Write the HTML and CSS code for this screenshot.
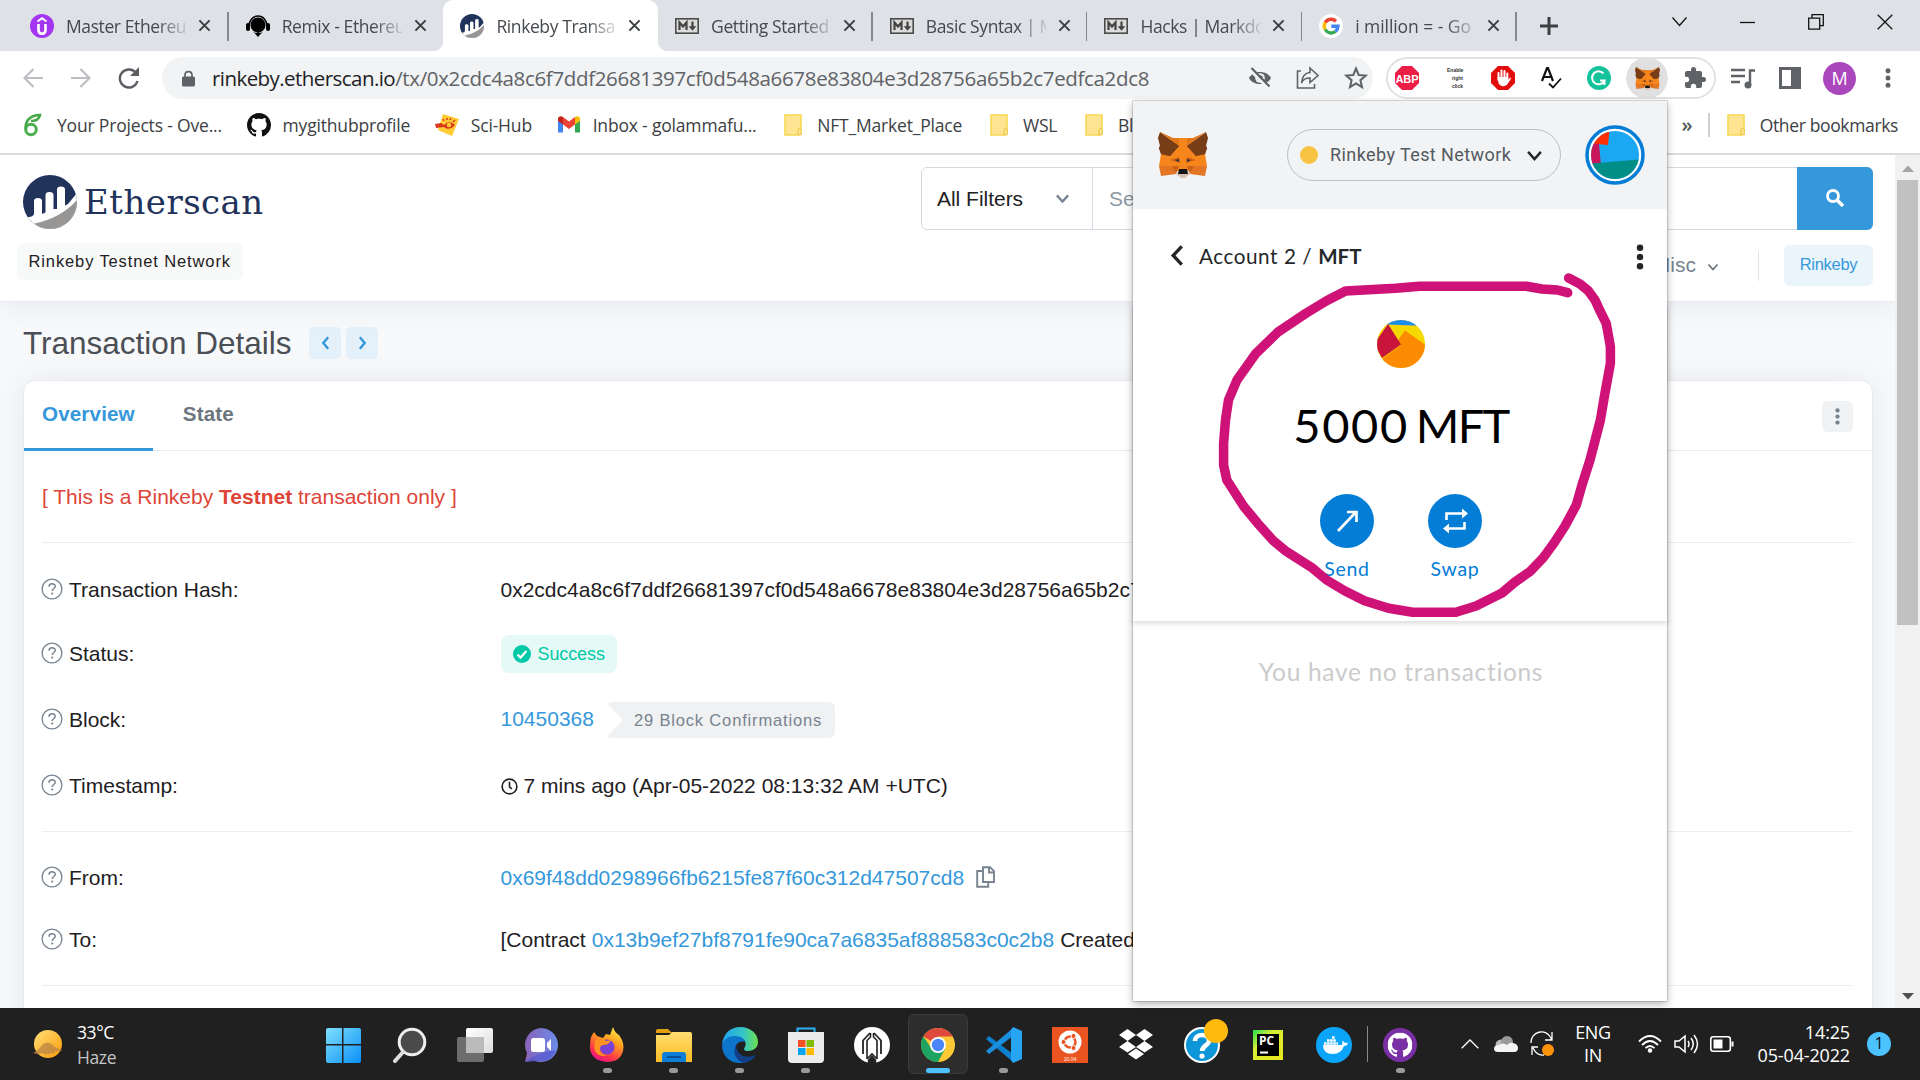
FILE: index.html
```
<!DOCTYPE html>
<html lang="en">
<head>
<meta charset="utf-8">
<title>Rinkeby Transaction</title>
<link rel="stylesheet" href="styles.css">
</head>
<body>
<svg class="defs" width="0" height="0">
  <defs>
    <linearGradient id="gSun" x1="0" y1="0" x2="1" y2="1"><stop offset="0" stop-color="#ffe07a"/><stop offset="1" stop-color="#fb9a06"/></linearGradient>
    <linearGradient id="gWin" x1="0" y1="0" x2="1" y2="1"><stop offset="0" stop-color="#7fe0ff"/><stop offset="1" stop-color="#0a8ff5"/></linearGradient>
    <linearGradient id="gChat" x1="0" y1="0" x2="1" y2="0"><stop offset="0" stop-color="#8a63b8"/><stop offset="1" stop-color="#6a8cea"/></linearGradient>
    <linearGradient id="gFire" x1="0.8" y1="0" x2="0.3" y2="1"><stop offset="0" stop-color="#fff04a"/><stop offset=".4" stop-color="#ff9a1e"/><stop offset=".8" stop-color="#ff2f4f"/><stop offset="1" stop-color="#e3128f"/></linearGradient>
    <linearGradient id="gFold" x1="0" y1="0" x2="0" y2="1"><stop offset="0" stop-color="#ffdf72"/><stop offset="1" stop-color="#fcbb22"/></linearGradient>
    <linearGradient id="gEdge" x1="0" y1="0" x2="1" y2="0"><stop offset="0" stop-color="#1fa3ea"/><stop offset=".6" stop-color="#35c6c4"/><stop offset="1" stop-color="#6fe04e"/></linearGradient>
    <linearGradient id="gPc" x1="0" y1="0" x2="1" y2="1"><stop offset="0" stop-color="#21e04f"/><stop offset=".35" stop-color="#d7ee35"/><stop offset="1" stop-color="#e9e51a"/></linearGradient>
    <linearGradient id="gView" x1="0" y1="0" x2="1" y2="1"><stop offset="0" stop-color="#fff"/><stop offset="1" stop-color="#ddd"/></linearGradient>
  </defs>
  <symbol id="close" viewBox="0 0 14 14"><path d="M1.5 1.5l11 11M12.500 1.500l-11 11" stroke="#3c4043" stroke-width="2.200" fill="none"/></symbol>
  <symbol id="md" viewBox="0 0 24 16"><rect x=".8" y=".8" width="22.400" height="14.400" fill="#dcdcdc" stroke="#4b4b4b" stroke-width="1.600"/><path d="M4.500 12V4.500l3.500 4 3.500-4V12" stroke="#444" stroke-width="2.200" fill="none"/><path d="M17.500 3.500V10" stroke="#444" stroke-width="2.200"/><path d="M13.700 8.300h7.600l-3.800 4.500z" fill="#444"/></symbol>
  <symbol id="folder" viewBox="0 0 18 22"><path d="M1 1h16v14.500c-2 0-2.500 1-2.500 2.500v3H1z" fill="#ffe591" stroke="#f8d856" stroke-width="1.600"/><path d="M14 20.800v-5c0-2 3.300-2 3.300 0v5z" fill="#ffe591" stroke="#e9c13c"/></symbol>
  <symbol id="github" viewBox="0 0 16 16"><path d="M8 0C3.580 0 0 3.580 0 8c0 3.540 2.290 6.530 5.470 7.590.4.070.55-.17.55-.38 0-.19-.01-.82-.01-1.490-2.010.37-2.530-.49-2.690-.94-.09-.23-.48-.94-.82-1.130-.28-.15-.68-.52-.01-.53.63-.01 1.080.58 1.230.82.72 1.210 1.870.87 2.330.66.07-.52.28-.87.51-1.070-1.780-.2-3.640-.89-3.640-3.950 0-.87.31-1.590.82-2.150-.08-.2-.36-1.020.08-2.120 0 0 .67-.21 2.200.82.64-.18 1.320-.27 2-.27s1.360.09 2 .27c1.530-1.040 2.200-.82 2.200-.82.44 1.100.16 1.920.08 2.120.51.56.82 1.270.82 2.150 0 3.070-1.870 3.750-3.650 3.950.29.25.54.73.54 1.480 0 1.070-.01 1.930-.01 2.200 0 .21.15.46.55.38A8.010 8.010 0 0016 8c0-4.420-3.580-8-8-8z"/></symbol>
  <symbol id="escan" viewBox="0 0 54 54"><clipPath id="cl"><circle cx="27" cy="27" r="27"/></clipPath><g clip-path="url(#cl)"><rect width="54" height="54" fill="#21325b"/><path d="M0 44l5-2c4 0 5-1 6-3h8l12-5h4l10-5 9-11v36H0z" fill="#fff"/><path d="M11 44V26q0-3 4-3t4 3v16zM22.500 40V20q0-3 4-3t4 3v16zM34 36V14.500q0-3 4-3t4 3V32z" fill="#fff"/><path d="M11.500 48.500Q38 43 54 25v29H12z" fill="#979695"/></g></symbol>
  <symbol id="fox" viewBox="0 0 50 46">
    <path d="M15 6h20l12 16 2 12-12 5H13L1 34l2-12z" fill="#f6851b"/>
    <path d="M2 0l19 14-9 10-9-2-2-6 1-2-2-8zM48 0L29 14l9 10 9-2 2-6-1-2 2-8z" fill="#763d16"/>
    <path d="M2 0l13 6h6v8zM48 0L35 6h-6v8z" fill="#e2761b"/>
    <path d="M5 4l16 10-9 10-9-2-2-6 1-2zM45 4L29 14l9 10 9-2 2-6-1-2z" fill="#763d16"/>
    <path d="M21 6h8l-1 22h-6z" fill="#f6851b"/>
    <path d="M1 34h13l4 8-15 2zM49 34H36l-4 8 15 2z" fill="#e27625"/>
    <path d="M14 34l4 8 3-8zM36 34l-4 8-3-8z" fill="#cd6116"/>
    <path d="M18 42l4-4h6l4 4-5 4h-4z" fill="#d7c1b3"/>
    <path d="M12 28l9-3 1 6zM38 28l-9-3-1 6z" fill="#cd6116"/>
    <path d="M17 28l4-1 0 3zM33 28l-4-1 0 3z" fill="#233447"/>
    <path d="M21 37h8l1 5H20z" fill="#161616"/>
  </symbol>
  <symbol id="help" viewBox="0 0 22 22"><circle cx="11" cy="11" r="9.900" fill="none" stroke="#77838f" stroke-width="1.300"/><path d="M8 8.800c0-4 6.200-3.800 6.200-.4 0 2-3 2.200-3 4.500" fill="none" stroke="#77838f" stroke-width="1.500"/><circle cx="11.200" cy="15.500" r="1.100" fill="#77838f"/></symbol>
  <symbol id="chev" viewBox="0 0 12 12"><path d="M1.500 3.500l4.500 5 4.500-5" fill="none" stroke="currentColor" stroke-width="1.800"/></symbol>
  <symbol id="dots" viewBox="0 0 8 28"><circle cx="4" cy="4" r="3.500"/><circle cx="4" cy="14" r="3.500"/><circle cx="4" cy="24" r="3.500"/></symbol>
</svg>

<div class="screen">
  <div class="tabstrip">
    <div class="tab"><svg class="fav" viewBox="0 0 24 24"><circle cx="12" cy="12" r="12" fill="#a435f0"/><path d="M7.500 7.500L12 4.300l4.500 3.200" stroke="#fff" stroke-width="2" fill="none"/><path d="M8.500 10v6c0 5 7 5 7 0v-6" stroke="#fff" stroke-width="2.600" fill="none"/></svg><span class="tab-title">Master Ethereu</span><svg class="x"><use href="#close"/></svg></div>
    <div class="tab"><svg class="fav" viewBox="0 0 24 24"><path d="M3 12a9 10 0 0118 0" fill="none" stroke="#000" stroke-width="1.600"/><circle cx="12" cy="11" r="7.500"/><rect y="9" width="4" height="8" rx="2"/><rect x="20" y="9" width="4" height="8" rx="2"/><path d="M7.500 18l2.500 1 2-1 2 1 2.500-1-4.500 5z"/></svg><span class="tab-title">Remix - Ethereu</span><svg class="x"><use href="#close"/></svg></div>
    <div class="tab active"><svg class="fav"><use href="#escan"/></svg><span class="tab-title">Rinkeby Transa</span><svg class="x"><use href="#close"/></svg></div>
    <div class="tab"><svg class="fav"><use href="#md"/></svg><span class="tab-title">Getting Started</span><svg class="x"><use href="#close"/></svg></div>
    <div class="tab"><svg class="fav"><use href="#md"/></svg><span class="tab-title">Basic Syntax | M</span><svg class="x"><use href="#close"/></svg></div>
    <div class="tab"><svg class="fav"><use href="#md"/></svg><span class="tab-title">Hacks | Markdo</span><svg class="x"><use href="#close"/></svg></div>
    <div class="tab"><svg class="fav" viewBox="0 0 24 24"><circle cx="12" cy="12" r="12" fill="#fff"/><g fill="none" stroke-width="3.400"><path d="M6.200 8.500A7 7 0 0117 7.200" stroke="#ea4335"/><path d="M6.200 8.500a7 7 0 000 7" stroke="#fbbc05"/><path d="M6.200 15.500A7 7 0 0016.500 17.500" stroke="#34a853"/><path d="M16.500 17.500A7 7 0 0019 12.300H12.300" stroke="#4285f4"/></g></svg><span class="tab-title google">i million = - Go</span><svg class="x"><use href="#close"/></svg></div>
    <svg class="plus" viewBox="0 0 18 18"><path d="M9 0v18M0 9h18" stroke="#3c4043" stroke-width="3"/></svg>
    <div class="wincontrols">
      <svg width="15" height="10" viewBox="0 0 15 10"><path d="M.5.5l7 8 7-8"/></svg>
      <svg width="15" height="10" viewBox="0 0 15 10"><path d="M0 5.500h15"/></svg>
      <svg width="16" height="16" viewBox="0 0 16 16"><path d="M.7 4.200h11v11H.7zM4 4V.7h11.300v11H12"/></svg>
      <svg width="16" height="16" viewBox="0 0 16 16"><path d="M.7.7l14.600 14.600M15.300.7L.7 15.300"/></svg>
    </div>
  </div>

  <div class="toolbar">
    <svg class="nav" viewBox="0 0 20 20"><path d="M20 10H2M10.500 1L1.500 10l9 9" stroke="#bcbec1" stroke-width="2.200" fill="none"/></svg>
    <svg class="nav" viewBox="0 0 20 20"><path d="M0 10h18M9.500 1l9 9-9 9" stroke="#bcbec1" stroke-width="2.200" fill="none"/></svg>
    <svg class="nav reload" viewBox="0 0 22 22"><path d="M18 6a9 9 0 101.500 8" stroke="#5a5e62" stroke-width="2.400" fill="none"/><path d="M21 0v9h-9z" fill="#5a5e62"/></svg>
    <div class="omnibox">
      <svg class="lock" viewBox="0 0 13 16"><path d="M3 7V4.500c0-4.500 7-4.500 7 0V7" fill="none" stroke="#5f6368" stroke-width="1.700"/><rect y="6" width="13" height="10" rx="1.500" fill="#5f6368"/></svg>
      <span class="url"><span class="host">rinkeby.etherscan.io</span><span class="path">/tx/0x2cdc4a8c6f7ddf26681397cf0d548a6678e83804e3d28756a65b2c7edfca2dc8</span></span>
      <svg class="oicon" viewBox="0 0 24 24"><path d="M1 12C5 4 19 4 23 12 19 20 5 20 1 12z" fill="#5f6368"/><circle cx="12" cy="12" r="4.800" fill="#f1f3f4"/><circle cx="12" cy="12" r="2.800" fill="#5f6368"/><path d="M1.500 3.500l19 19" stroke="#f1f3f4" stroke-width="3"/><path d="M3.500 2l18 18.500" stroke="#5f6368" stroke-width="2.200"/></svg>
      <svg class="oicon" viewBox="0 0 24 24"><path d="M5 5H1.500v17h17v-4M14 2l8 7.500-8 7v-4.500c-4 0-7 1-8.500 5C6 11 9 7 14 6.500z" fill="none" stroke="#5f6368" stroke-width="1.600"/></svg>
      <svg class="oicon" viewBox="0 0 24 24"><path d="M12 2.500l2.700 6.500 7 .6-5.300 4.600 1.600 6.900-6-3.700-6 3.700 1.600-6.900L2.300 9.600l7-.6z" fill="none" stroke="#5f6368" stroke-width="2"/></svg>
    </div>
    <div class="extensions">
      <span class="slot"><svg width="24" height="24" viewBox="0 0 24 24"><path d="M7 0h10l7 7v10l-7 7H7l-7-7V7z" fill="#ed1e45"/><text x="12" y="16.500" text-anchor="middle" class="abp">ABP</text></svg></span>
      <span class="slot erc"><i>Enable</i><i>right</i><i>click</i></span>
      <span class="slot"><svg width="24" height="24" viewBox="0 0 24 24"><path d="M7 0h10l7 7v10l-7 7H7l-7-7V7z" fill="#e40d0d"/><path d="M7.500 14V7M10.500 12V4.500M13.500 12V5M16.300 13V7.500" stroke="#fff" stroke-width="2" stroke-linecap="round"/><path d="M6.500 11h10.800v3l2-2.500c1 0 .8 1 .2 2L16.500 18c-2 3-7.500 3-9-1z" fill="#fff"/></svg></span>
      <span class="slot"><svg width="22" height="24" viewBox="0 0 22 24"><path d="M2 15L7 2h1l5 13M4 11h7" stroke="#111" stroke-width="2.200" fill="none"/><path d="M9 17.500l4 4 8-9" stroke="#111" stroke-width="1.800" fill="none"/></svg></span>
      <span class="slot"><svg width="24" height="24" viewBox="0 0 24 24"><circle cx="12" cy="12" r="12" fill="#15c39a"/><path d="M16.500 7.500a6.500 6.500 0 101 7H13M17.500 14v5" stroke="#fff" stroke-width="2" fill="none"/></svg></span>
      <span class="slot on"><svg width="25" height="23"><use href="#fox"/></svg></span>
      <span class="slot"><svg width="24" height="24" viewBox="0 0 24 24"><path d="M20.500 11H19V7a2 2 0 00-2-2h-4V3.500a2.500 2.500 0 00-5 0V5H4a2 2 0 00-2 2v3.800h1.500a2.700 2.700 0 010 5.400H2V20a2 2 0 002 2h3.800v-1.500a2.700 2.700 0 015.400 0V22H17a2 2 0 002-2v-4h1.500a2.500 2.500 0 000-5z" fill="#5f6368"/></svg></span>
    </div>
    <div class="right-tools">
      <svg width="24" height="22" viewBox="0 0 24 22"><path d="M0 3h14M0 9h14M0 15h9M19 18V3.500h5" stroke="#5f6368" stroke-width="2.400" fill="none"/><circle cx="17" cy="18" r="3.500" fill="#5f6368"/></svg>
      <svg width="22" height="22" viewBox="0 0 22 22"><path d="M1.500 1.500h19v19h-19z" fill="#fff" stroke="#5f6368" stroke-width="3"/><path d="M12 1h9v20h-9z" fill="#5f6368"/></svg>
      <span class="me">M</span>
      <svg width="6" height="20" viewBox="0 0 8 28" fill="#5f6368"><use href="#dots"/></svg>
    </div>
  </div>

  <div class="bookmarks">
    <div class="bm"><svg viewBox="0 0 24 24"><circle cx="10" cy="16.500" r="5.300" fill="none" stroke="#4caf50" stroke-width="3"/><path d="M4.700 16C4 8 9 2 19 2c-1 5-5 6-9 6" fill="none" stroke="#46a948" stroke-width="2.600"/></svg><span>Your Projects - Ove...</span></div>
    <div class="bm"><svg fill="#111"><use href="#github"/></svg><span>mygithubprofile</span></div>
    <div class="bm"><svg viewBox="0 0 24 24"><path d="M8 1l16 5-7 17-14-6z" fill="#fc3"/><path d="M0 11l6-1 3 2c4-4 8-3 11 0-3 4-8 5-11 2l-8 1z" fill="#d8391d"/><circle cx="14" cy="12" r="2.200" fill="#fc3"/><path d="M9 8l-1-2M12 7V5M15 7l1-2M18 9l2-2" stroke="#d8391d" stroke-width="1.500"/></svg><span>Sci-Hub</span></div>
    <div class="bm"><svg viewBox="0 0 24 24"><path d="M1 5v14.500h5V10z" fill="#4285f4"/><path d="M23 5v14.500h-5V10z" fill="#34a853"/><path d="M1 6c0-3 3-3.500 5-2v7.500L1 8z" fill="#c5221f"/><path d="M23 6c0-3-3-3.500-5-2v7.500L23 8z" fill="#fbbc04"/><path d="M6 4l6 4.500L18 4v7.500L12 16l-6-4.500z" fill="#ea4335"/></svg><span>Inbox - golammafu...</span></div>
    <div class="bm fold"><svg><use href="#folder"/></svg><span>NFT_Market_Place</span></div>
    <div class="bm fold"><svg><use href="#folder"/></svg><span>WSL</span></div>
    <div class="bm fold"><svg><use href="#folder"/></svg><span>Bl</span></div>
    <div class="bm-end"><b>»</b><i></i><div class="bm fold"><svg><use href="#folder"/></svg><span>Other bookmarks</span></div></div>
  </div>

  <div class="viewport">
    <div class="page">
      <div class="header">
        <div class="brand">
          <div class="logo"><svg><use href="#escan"/></svg><span>Etherscan</span></div>
          <div class="netbadge">Rinkeby Testnet Network</div>
        </div>
        <div class="head-right">
          <div class="search"><div class="filter"><span>All Filters</span><svg><use href="#chev"/></svg></div><div class="query">Se</div><div class="go"><svg viewBox="0 0 18 18"><circle cx="7" cy="7" r="5.500" fill="none" stroke="#fff" stroke-width="2.800"/><path d="M11 11l6 6" stroke="#fff" stroke-width="3.400"/></svg></div></div>
          <div class="menu"><span>Misc</span><svg><use href="#chev"/></svg><i></i><b>Rinkeby</b></div>
        </div>
      </div>
      <div class="title"><h1>Transaction Details</h1><span><svg viewBox="0 0 10 16"><path d="M8 1.500L2.500 8 8 14.500"/></svg></span><span><svg viewBox="0 0 10 16"><path d="M2 1.500L7.500 8 2 14.500"/></svg></span></div>
      <div class="card">
        <div class="cardtabs"><span class="sel">Overview</span><span>State</span><em><svg viewBox="0 0 8 28" fill="#77838f"><use href="#dots"/></svg></em></div>
        <div class="body">
          <div class="warn">[ This is a Rinkeby <b>Testnet</b> transaction only ]</div>
          <div class="group">
            <div class="row"><svg class="q"><use href="#help"/></svg><label>Transaction Hash:</label><div>0x2cdc4a8c6f7ddf26681397cf0d548a6678e83804e3d28756a65b2c7edfca2dc8</div></div>
            <div class="row"><svg class="q"><use href="#help"/></svg><label>Status:</label><div><span class="ok"><svg viewBox="0 0 18 18"><circle cx="9" cy="9" r="9" fill="#00c9a7"/><path d="M4.500 9.500l3 3L13.500 6" stroke="#fff" stroke-width="2.300" fill="none"/></svg>Success</span></div></div>
            <div class="row tall"><svg class="q"><use href="#help"/></svg><label>Block:</label><div><a class="blk">10450368</a><span class="conf">29 Block Confirmations</span></div></div>
            <div class="row time"><svg class="q"><use href="#help"/></svg><label>Timestamp:</label><div><svg class="clock" viewBox="0 0 18 18"><circle cx="9" cy="9" r="7.800"/><path d="M9 4v5.500l2.500 2"/></svg>7 mins ago (Apr-05-2022 08:13:32 AM +UTC)</div></div>
          </div>
          <div class="group">
            <div class="row short"><svg class="q"><use href="#help"/></svg><label>From:</label><div><a>0x69f48dd0298966fb6215fe87f60c312d47507cd8</a><svg class="copy" viewBox="0 0 19 22"><path d="M7 1.200h7l4 4V16H7zM13 1.500V6.500h5M6 5H1.200v15.700h11V17"/></svg></div></div>
            <div class="row short"><svg class="q"><use href="#help"/></svg><label>To:</label><div class="to"><span>[Contract</span><a>0x13b9ef27bf8791fe90ca7a6835af888583c0c2b8</a><span>Created]</span></div></div>
          </div>
        </div>
      </div>
    </div>
    <div class="scrollbar"><svg viewBox="0 0 12 7"><path d="M0 7l6-6.500L12 7z" fill="#a3a3a3"/></svg><div class="thumb"></div><svg class="down" viewBox="0 0 12 7"><path d="M0 0l6 6.500L12 0z" fill="#505050"/></svg></div>
  </div>

  <div class="taskbar">
    <div class="weather"><svg viewBox="0 0 30 28"><circle cx="15" cy="14" r="14" fill="url(#gSun)"/><path d="M0 23q7-4 8-7 6-7 13 0 3 3 9 4-4 2-8 1 1 3-4 2-4 3-9 0-4 2-9 0z" fill="#b98445" opacity=".75"/></svg><div><span>33°C</span><span class="dim">Haze</span></div></div>
    <div class="apps">
      <div class="app"><svg viewBox="0 0 36 36"><path d="M1 3q0-2 2-2h14v16H1zM18.500 1H34q2 0 2 2v14H18.500zM1 18.500h16V36H3q-2 0-2-2zM18.500 18.500H36V34q0 2-2 2H18.500z" fill="url(#gWin)"/></svg></div>
      <div class="app"><svg viewBox="0 0 36 36"><circle cx="21" cy="15" r="12.800" fill="#4a4a4a" stroke="#eee" stroke-width="3"/><path d="M12 25l-8 9" stroke="#ddd" stroke-width="4" stroke-linecap="round"/></svg></div>
      <div class="app"><svg viewBox="0 0 36 36"><rect x="0" y="10" width="27" height="25" rx="2" fill="#6d6d6d"/><rect x="9" y="1" width="27" height="25" rx="2" fill="url(#gView)"/><rect x="9" y="10" width="18" height="16" fill="#bbb"/></svg></div>
      <div class="app"><svg viewBox="0 0 36 36"><path d="M18 1a17 17 0 11-8 32l-8 2 2-9A17 17 0 0118 1z" fill="url(#gChat)"/><path d="M9 30Q28 22 33 24 28 35 16 34L2 35z" fill="#5558d0" opacity=".7"/><rect x="8" y="11" width="14" height="14" rx="2.500" fill="#fff"/><path d="M24 16l4-4v12l-4-4z" fill="#fff"/></svg></div>
      <div class="app run"><svg viewBox="0 0 36 36"><path d="M2 10l3-5 3 4 6 2 3-4 4 1 3-8q2 6 6 8 6 8 4 16-3 11-16 11Q3 34 1 22q0-8 1-12z" fill="url(#gFire)"/><circle cx="18" cy="20" r="7.500" fill="#7842d6"/><path d="M8 11q5-1 9 3l5-1q-2 5-7 5-4 0-4 4 0 6 8 6-9 3-13-4-2-8 2-13z" fill="#ff9322"/></svg></div>
      <div class="app run"><svg viewBox="0 0 36 36"><path d="M0 4q0-2 2-2h10l4 4H0z" fill="#e19f0c"/><path d="M0 8h13l3-3h18q2 0 2 2v28H0z" fill="url(#gFold)"/><path d="M6 35v-7q0-3 3-3h18q3 0 3 3v7z" fill="#0d7fd6"/><path d="M11 30h14" stroke="#064f9c" stroke-width="2"/></svg></div>
      <div class="app run"><svg viewBox="0 0 36 36"><path d="M0 18C1 6 9 0 18 0c11 0 18 7 18 15 0 6-5 9-10 9-4 0-5-2-3-4 3-7-4-10-9-10C7 10 2 13 0 18z" fill="url(#gEdge)"/><path d="M0 18c1-5 6-9 13-9 5 0 9 2 10 6-6-2-11 3-9 9 2 7 11 10 19 5-4 5-9 7-15 7C8 36 0 29 0 18z" fill="#0c74ca"/><path d="M14 18q-5 12 7 18 8-1 13-8-10 4-16-1-4-4-4-9z" fill="#123f86"/></svg></div>
      <div class="app run"><svg viewBox="0 0 36 36"><path d="M9.500 7V1.500h17V7" fill="none" stroke="#2fb2f2" stroke-width="2"/><path d="M0 5h36v27q0 4-4 4H4q-4 0-4-4z" fill="#ececec"/><path d="M10 13h7.500v7H10z" fill="#f25022"/><path d="M18.500 13H26v7h-7.500z" fill="#7fba00"/><path d="M10 21h7.500v7H10z" fill="#00a4ef"/><path d="M18.500 21H26v7h-7.500z" fill="#ffb900"/></svg></div>
      <div class="app"><svg viewBox="0 0 36 36"><circle cx="18" cy="18" r="18" fill="#fff"/><path d="M9 27V13.500l7-7.500M27 27V13.500L20 6" stroke="#222" stroke-width="1.800" fill="none"/><path d="M13 32V13.500l3.500-3.500V6M23 32V13.500L19.500 10V6M13 32l5-5 5 5" fill="none" stroke="#222" stroke-width="1.600"/><path d="M13.800 33l4.200-5 4.200 5v3h-8.400z" fill="#222"/></svg></div>
      <div class="app run current"><svg viewBox="0 0 36 36"><circle cx="18" cy="18" r="17" fill="#fcc934"/><path d="M18 18L3.300 9.500A17 17 0 0132.700 9.500H18z" fill="#de4b3e"/><path d="M3.300 9.500A17 17 0 0018 35l7-13H12z" fill="#1da462"/><circle cx="18" cy="18" r="8" fill="#fff"/><circle cx="18" cy="18" r="6.200" fill="#4a86f7"/></svg></div>
      <div class="app run"><svg viewBox="0 0 36 36"><path d="M0 12l3-3 24 18v8z" fill="#0c7fcf"/><path d="M0 24l3 3L27 9V1z" fill="#1a8fdd"/><path d="M27 0l9 4v28l-9 4-2-3V3z" fill="#27a5f2"/></svg></div>
      <div class="app"><svg viewBox="0 0 36 36"><rect width="36" height="36" fill="#e95420"/><circle cx="18" cy="15" r="11.500" fill="#fff"/><circle cx="18" cy="15" r="5.500" fill="none" stroke="#e95420" stroke-width="2.500"/><g fill="#e95420" stroke="#fff"><circle cx="11.500" cy="15" r="2.500"/><circle cx="21.500" cy="9" r="2.500"/><circle cx="21.500" cy="21" r="2.500"/></g><text x="18" y="33.500" text-anchor="middle" class="ver">20.04</text></svg></div>
      <div class="app"><svg viewBox="0 0 36 36"><path d="M9.500 2l8.500 6-8.500 6L1 8zM26.500 2L35 8l-8.500 6L18 8zM9.500 14l8.500 6-8.500 5.500L1 20zM26.500 14l8.500 6-8.500 5.500L18 20zM18 21.500l8 5.500-8 5.500-8-5.500z" fill="#fff"/></svg></div>
      <div class="app"><svg class="wide" viewBox="0 0 44 44"><circle cx="18" cy="26" r="17" fill="#0c96d8" stroke="#fff" stroke-width="2"/><path d="M11 22c0-8 14-8 14 0 0 4-7 5-7 10" fill="none" stroke="#fff" stroke-width="4.500"/><circle cx="18" cy="37" r="2.600" fill="#fff"/><circle cx="32" cy="12" r="12" fill="#ffb90f"/></svg></div>
      <div class="app"><svg viewBox="0 0 36 36"><rect x="3" y="3" width="30" height="30" fill="url(#gPc)"/><rect x="7" y="7" width="22" height="22" fill="#000"/><text x="9" y="18" class="pc">PC</text><path d="M10 25.500h8" stroke="#fff" stroke-width="2"/></svg></div>
      <div class="app"><svg viewBox="0 0 36 36"><circle cx="18" cy="18" r="18" fill="#0aa5fb"/><path d="M7 18h19q1-3 0-4 2 0 3 2 2-.5 3 0-1 3-4 3-3 8-11 8-10 0-10-9z" fill="#fff"/><path d="M8 16.500h14M11 13.500h9M16 10.500h3" stroke="#fff" stroke-width="2.400" stroke-dasharray="2.600 .5"/></svg></div>
      <i class="sep"></i>
      <div class="app run"><svg viewBox="0 0 36 36"><circle cx="18" cy="18" r="17" fill="#7b2fa5"/><svg x="5.500" y="5.500" width="25" height="25" fill="#fff"><use href="#github"/></svg></svg></div>
    </div>
    <div class="tray">
      <span><svg width="18" height="10" viewBox="0 0 18 10"><path d="M.7 9.300L9 1l8.300 8.300" stroke="#fff" stroke-width="1.300" fill="none"/></svg></span>
      <span><svg width="24" height="16" viewBox="0 0 24 16"><circle cx="7" cy="9" r="5.500" fill="#bbb"/><circle cx="13" cy="6" r="6" fill="#999"/><path d="M4 16q-4 0-4-3.500T5 9q4-3 8 0 3-3 6-2 5 1 5 5t-4 4z" fill="#f4f4f4"/></svg></span>
      <span><svg width="24" height="26" viewBox="0 0 24 26"><path d="M1 12A10.500 10.500 0 0121 7v2M15 9h7V1M2 24v-8h6M3 17q4 8 11 7" stroke="#fff" stroke-width="1.300" fill="none"/><circle cx="18" cy="19" r="6" fill="#fc9208"/></svg></span>
      <div class="lang">ENG<br>IN</div>
      <span><svg width="24" height="18" viewBox="0 0 24 18"><g fill="none" stroke="#fff" stroke-width="1.800"><path d="M1 6.500Q12-4.500 23 6.500"/><path d="M4 10Q12 2 20 10"/><path d="M7.500 13.200q4.500-4.500 9 0"/></g><circle cx="12" cy="15.500" r="2.200" fill="#fff"/></svg></span>
      <span><svg width="25" height="20" viewBox="0 0 25 20"><path d="M1 7h4l6-5v16l-6-5H1zM14 7q2 3 0 6M17 4q4.500 6 0 12M20 1q7 9 0 18" stroke="#fff" stroke-width="1.500" fill="none"/></svg></span>
      <span><svg width="24" height="16" viewBox="0 0 24 16"><rect x=".8" y=".8" width="19.500" height="14.400" rx="2.500" fill="none" stroke="#fff" stroke-width="1.600"/><path d="M3.500 3.500h9v9h-9zM21.500 5.500h2v5h-2z" fill="#fff"/></svg></span>
      <div class="clock-text">14:25<br>05-04-2022</div>
      <b>1</b>
    </div>
  </div>

  <div class="popup">
    <div class="pop-head"><svg class="mm"><use href="#fox"/></svg><div class="network"><i></i><span>Rinkeby Test Network</span><svg><use href="#chev"/></svg></div>
      <svg class="acct" viewBox="0 0 60 60"><clipPath id="ca"><circle cx="30" cy="30" r="24"/></clipPath><circle cx="30" cy="30" r="28" fill="#fff" stroke="#037dd6" stroke-width="3.500"/><g clip-path="url(#ca)"><path d="M0 0h60v60H0z" fill="#1aa8f2"/><path d="M0 0h25l-2 20L0 18z" fill="#fb2f05"/><path d="M0 19l14 0 2 22L0 46z" fill="#c8145b"/><path d="M0 39l60-5v27H0z" fill="#018e87"/></g></svg></div>
    <div class="crumbs"><svg class="back" viewBox="0 0 14 22"><path d="M12 1.500L3 11l9 9.500" fill="none" stroke="#24272a" stroke-width="3.500"/></svg><span>Account 2 /</span><b>MFT</b><svg class="more" fill="#24272a"><use href="#dots"/></svg></div>
    <div class="asset">
      <svg class="token" viewBox="0 0 48 48"><clipPath id="ct"><circle cx="24" cy="24" r="24"/></clipPath><g clip-path="url(#ct)"><path d="M0 0h48v48H0z" fill="#f5d800"/><path d="M0 0h48v6L10 4.500z" fill="#1a8cf0"/><path d="M28 10.500l20 14V48H0l5-9 19-14-3-5z" fill="#fc8b02"/><path d="M11 4l13 20.500L5 38l-8-14z" fill="#c9153c"/></g></svg>
      <div class="amount"><span>5000</span><span class="unit">MFT</span></div>
      <div class="actions">
        <div><svg viewBox="0 0 54 54"><circle cx="27" cy="27" r="27" fill="#037dd6"/><path d="M18 37l18-19M27 18h9.500v10" fill="none" stroke="#fff" stroke-width="2.600"/></svg><span>Send</span></div>
        <div><svg viewBox="0 0 54 54"><circle cx="27" cy="27" r="27" fill="#037dd6"/><path d="M18.500 26v-6.500H35M36.500 28v6.500H20" fill="none" stroke="#fff" stroke-width="2.600"/><path d="M34 14.500l6 5-6 5zM21 29.500l-6 5 6 5z" fill="#fff"/></svg><span>Swap</span></div>
      </div>
    </div>
    <div class="empty">You have no transactions</div>
  </div>
  <svg class="ink" viewBox="0 0 1920 1080"><path d="M1568.700 278L1580 284 1588.300 290.700 1595 300 1600.400 311.700 1606.200 323.300 1608 333 1610.400 346.700V363.300L1604.900 393.300 1600.400 420 1590 460 1582 485 1576.300 505 1565 526 1554 543 1543 558 1529.800 571.700 1515 582 1502 593 1476 606 1455.800 612.300H1412.700L1388.600 608.300 1364.500 600.700 1345 591 1326.600 580 1312.800 568.300 1285.300 550.700 1273.200 540.700 1257.700 523.300 1244 506.700 1226.800 480 1223.600 465V443.300L1225.500 420 1228.500 400 1237 380 1256 353.300 1278.400 331.700 1306 313.300 1326.600 300.700 1345.600 291 1395.500 288.300 1419.600 286.300H1526.400L1541.900 289 1557.400 290 1567.700 292.700"/></svg>
</div>
</body>
</html>
```
FILE: styles.css
```
* { box-sizing: border-box; }
body { margin: 0; overflow: hidden; font-family: "Open Sans", sans-serif; }
svg { display: block; flex: none; }
.defs { position: absolute; }
i, em { font-style: normal; }
.screen { position: relative; width: 1920px; height: 1080px; display: flex; flex-direction: column; overflow: hidden; background: #fff; }

/* tab strip */
.tabstrip { height: 51px; flex: none; background: #dee1e6; display: flex; align-items: center; padding-left: 14px; }
.tab { width: 214.700px; height: 51px; flex: none; display: flex; align-items: center; padding-left: 17px; position: relative; font-size: 17.500px; letter-spacing: -.4px; color: #45494d; }
.tab:first-child { padding-left: 16px; }
.tab::after { content: ""; position: absolute; right: 0; top: 12px; width: 1.500px; height: 29px; background: #85888c; }
.tab:nth-child(2)::after, .tab.active::after { display: none; }
.fav { width: 24px; height: 24px; }
.tab-title { width: 120px; margin: 0 12px; overflow: hidden; white-space: nowrap; -webkit-mask-image: linear-gradient(to right, #000 76%, rgba(0,0,0,.15)); mask-image: linear-gradient(to right, #000 76%, rgba(0,0,0,.15)); }
.tab-title.google { letter-spacing: -.05px; }
.x { width: 13px; height: 13px; }
.tab.active { background: #fff; border-radius: 10px 10px 0 0; }
.tab.active::before { content: ""; position: absolute; left: -10px; bottom: 0; width: 10px; height: 10px; background: radial-gradient(circle at 0 0, transparent 10px, #fff 10.500px); }
.tab.active + .tab::before { content: ""; position: absolute; left: 0; bottom: 0; width: 10px; height: 10px; background: radial-gradient(circle at 10px 0, transparent 10px, #fff 10.500px); }
.plus { width: 18px; height: 18px; margin-left: 23px; }
.wincontrols { margin-left: auto; display: flex; align-items: center; gap: 53px; padding: 0 27px 8px 0; }
.wincontrols path { stroke: #111; stroke-width: 1.300; fill: none; }

/* toolbar */
.toolbar { height: 50px; flex: none; display: flex; align-items: center; padding: 4px 0 0 23px; }
.nav { width: 20px; height: 20px; margin-right: 28px; }
.reload { width: 22px; height: 22px; margin: 0 22px 0 -1px; }
.omnibox { width: 1211px; height: 42px; border-radius: 21px; background: #f1f3f4; display: flex; align-items: center; padding-left: 20px; }
.lock { width: 13px; height: 17px; }
.url { margin-left: 17px; width: 1026px; flex: none; font-size: 20.500px; line-height: 40px; white-space: nowrap; color: #5f6368; display: flex; margin-right: 10px; }
.host { color: #202124; letter-spacing: -.56px; }
.path { letter-spacing: -.34px; }
.oicon { width: 24px; height: 24px; margin-right: 24px; }
.extensions { margin-left: 13px; width: 330px; flex: none; height: 42px; border: 2px solid #e1e2e4; border-radius: 21px; display: flex; align-items: center; }
.slot { width: 48px; height: 42px; flex: none; display: flex; align-items: center; justify-content: center; }
.slot:first-child { margin-left: -5px; }
.slot.on { background: radial-gradient(circle, #e0e0e0 20.500px, transparent 21px); }
.abp { font: bold 11px "Liberation Sans", sans-serif; fill: #fff; }
.erc { flex-direction: column; font: bold 5px/8px "Liberation Sans", sans-serif; }
.erc i { width: 16px; text-align: right; color: #333; }
.erc i:first-child { text-align: left; }
.right-tools { margin-left: 15px; display: flex; align-items: center; gap: 24px; }
.me { width: 33px; height: 33px; border-radius: 50%; background: #ab47bc; color: #fff; font-size: 18px; line-height: 33px; text-align: center; margin: 0 5px 0 -2px; }

/* bookmarks */
.bookmarks { height: 54px; flex: none; border-bottom: 2px solid #dadbdc; display: flex; align-items: center; padding: 0 22px 4px 21px; gap: 24.700px; font-size: 17.500px; letter-spacing: -.18px; color: #3c4043; white-space: nowrap; }
.bm { display: flex; align-items: center; gap: 12px; }
.bm svg { width: 24px; height: 24px; }
.bm.fold svg { width: 18px; height: 22px; margin: 0 3px; }
.bm-end { margin-left: auto; display: flex; align-items: center; letter-spacing: -.36px; }
.bm-end b { font-size: 20px; color: #55595d; font-weight: 600; line-height: 24px; }
.bm-end i { width: 1.500px; height: 24px; background: #ccced1; margin: 0 14px 0 16px; }

/* page */
.viewport { height: 853px; flex: none; display: flex; overflow: hidden; }
.page { width: 1895px; height: 853px; overflow: hidden; background: #f8f9fb; font-family: "Liberation Sans", Arial, sans-serif; color: #1e2022; font-size: 21px; }
.header { height: 147px; background: #fff; border-bottom: 1px solid #e7eaf3; box-shadow: 0 8px 24px rgba(140,152,164,.13); display: flex; justify-content: space-between; padding-right: 22px; position: relative; }
.brand { padding: 20px 0 0 17px; }
.logo { display: flex; align-items: center; gap: 7px; padding-left: 6px; height: 54px; color: #21325b; font: 34px/50px "DejaVu Serif", serif; letter-spacing: .48px; }
.logo span { display: block; padding-bottom: 1px; }
.logo svg { width: 54px; height: 54px; }
.netbadge { margin-top: 14px; width: 226px; height: 37px; line-height: 37px; border-radius: 6px; background: #f8fafa; padding-left: 11.500px; font-size: 16.500px; letter-spacing: .88px; white-space: nowrap; }
.head-right { width: 952px; padding-top: 12px; }
.search { height: 63px; border: 1px solid #d5dae2; border-radius: 6px; display: flex; line-height: 61px; font-size: 20.950px; }
.filter { width: 171px; border-right: 1px solid #d5dae2; padding: 0 22px 0 15px; display: flex; justify-content: space-between; align-items: center; }
.filter svg { width: 15px; height: 15px; color: #77838f; }
.query { flex: 1; padding-left: 16px; color: #8c98a4; }
.go { width: 76px; margin: -1px; background: #3498db; border-radius: 0 6px 6px 0; display: flex; align-items: center; justify-content: center; padding-bottom: 2px; }
.go svg { width: 18px; height: 18px; }
.menu { display: flex; justify-content: flex-end; align-items: center; margin-top: 15px; height: 41px; color: #77838f; }
.menu span { margin-top: -2px; }
.menu svg { width: 12px; height: 12px; margin: 2px 39px 0 11px; color: #6c757e; }
.menu i { width: 1px; height: 30px; background: #dfe3ea; margin-right: 25px; }
.menu b { width: 89px; height: 41px; border-radius: 6px; background: #eaf4fb; color: #3498db; font-weight: normal; font-size: 16.500px; line-height: 38px; text-align: center; letter-spacing: -.3px; }
.title { height: 78px; display: flex; align-items: center; padding: 4px 0 0 23px; }
.title h1 { margin: 0 18px 0 0; font-size: 31.500px; font-weight: normal; color: #4a4f55; line-height: 36px; white-space: nowrap; }
.title span { width: 32px; height: 32px; border-radius: 5px; background: #e4f0fa; margin-right: 5px; display: flex; align-items: center; justify-content: center; }
.title path { fill: none; stroke: #3498db; stroke-width: 2.800; }
.title svg { width: 9px; height: 14px; }
.card { margin: 0 22px 0 23px; height: 700px; background: #fff; border: 1px solid #e7eaf3; border-radius: 12px; box-shadow: 0 0 32px rgba(140,152,164,.16); }
.cardtabs { height: 70px; border-bottom: 1px solid #e7eaf3; display: flex; font-weight: bold; font-size: 20.600px; color: #6c757e; padding-right: 19px; line-height: 66px; letter-spacing: .15px; }
.cardtabs span { padding: 0 18px; height: 70px; margin-right: 12px; }
.cardtabs .sel { color: #3498db; border-bottom: 3px solid #3498db; }
.cardtabs em { margin: 20px 0 0 auto; width: 31px; height: 31px; border-radius: 6px; background: #f1f2f4; display: flex; align-items: center; justify-content: center; }
.cardtabs em svg { width: 5px; height: 17px; }
.body { padding: 0 19px 0 18px; }
.warn { height: 92px; line-height: 92px; border-bottom: 1px solid #eceef4; color: #de4437; }
.group { padding: 15px 0 14px; border-bottom: 1px solid #eceef4; }
.row { height: 64px; display: flex; align-items: center; white-space: nowrap; }
.row.tall { height: 68px; }
.row.time { height: 63px; }
.row.short { height: 62px; }
.q { width: 22px; height: 22px; margin: -2px 0 0 -1px; }
.row label { width: 431px; margin-left: 6px; }
.row > div { display: flex; align-items: center; padding-left: .5px; }
a { color: #3498db; }
.ok { height: 38px; width: 116px; border-radius: 8px; background: #e5f9f6; color: #00c9a7; display: flex; align-items: center; gap: 7px; padding-left: 12px; font-size: 18px; letter-spacing: -.1px; }
.ok svg { width: 18px; height: 18px; }
.blk { padding-bottom: 3px; }
.conf { margin-left: 12px; width: 229px; height: 36px; line-height: 36px; padding-left: 28px; background: #f0f1f3; color: #77838f; font-size: 16.500px; letter-spacing: .84px; border-radius: 6px; clip-path: polygon(0 0, 100% 0, 100% 100%, 0 100%, 17px 50%); }
.clock { width: 17px; height: 17px; margin: 2px 6px 0 0; }
.clock circle, .clock path { fill: none; stroke: #1e2022; stroke-width: 1.700; }
.copy { width: 19px; height: 22px; margin: -3px 0 0 12px; }
.copy path { fill: none; stroke: #77838f; stroke-width: 1.900; }
.to { gap: 6px; }
.scrollbar { width: 25px; background: #f1f1f1; display: flex; flex-direction: column; align-items: center; padding: 10px 0 8px; }
.scrollbar svg { width: 12px; height: 7px; }
.thumb { width: 21px; height: 445px; background: #c1c1c1; margin-top: 8px; }
.down { margin-top: auto; }

/* taskbar */
.taskbar { height: 72px; flex: none; background: #202020; color: #fff; display: flex; align-items: center; position: relative; }
.weather { width: 310px; padding-left: 33px; display: flex; align-items: center; gap: 14px; font-size: 17.500px; line-height: 24px; letter-spacing: -.4px; flex: none; }
.weather svg { width: 30px; height: 28px; }
.weather span { display: block; padding-top: 1px; }
.weather .dim { color: #c4c4c4; }
.apps { width: 1142px; display: flex; flex: none; align-items: center; }
.app { width: 66.100px; height: 60px; flex: none; display: flex; align-items: center; justify-content: center; position: relative; }
.app > svg { width: 36px; height: 36px; margin-top: 2px; }
.app > svg.wide { width: 44px; height: 44px; margin: -7px 0 0 8px; }
.app.run::after { content: ""; position: absolute; bottom: 1px; left: 50%; width: 9px; height: 5px; margin-left: -4.500px; border-radius: 2.500px; background: #9a9a9a; }
.current { background: #2d2d2d; border: 1px solid #3a3a3a; border-radius: 6px; width: 60px; margin: 0 3.050px; }
.app.current::after { width: 24px; margin-left: -12px; bottom: 0; background: #4cc2ff; }
.sep { width: 1.500px; height: 36px; background: #8a8a8a; margin: 0 -1px 0 -1px; }
.ver { font: 5px "Open Sans", sans-serif; fill: #fff; }
.pc { font: bold 12px "Open Sans", sans-serif; fill: #fff; }
.tray { display: flex; align-items: center; font-size: 18px; line-height: 23px; }
.tray > span { width: 36px; display: flex; justify-content: center; }
.lang { width: 72px; padding-right: 6px; text-align: center; letter-spacing: -.4px; }
.clock-text { width: 110px; text-align: right; letter-spacing: -.15px; white-space: nowrap; }
.tray b { width: 24px; height: 24px; margin-left: 17px; border-radius: 50%; background: #4cc2ff; color: #111; font-weight: normal; font-size: 16px; text-align: center; }

/* wallet popup floats over the page */
.popup { position: absolute; left: 1133px; top: 101px; width: 534px; height: 900px; background: #fff; box-shadow: 0 0 0 1px rgba(0,0,0,.13), 0 3px 8px rgba(0,0,0,.3); display: flex; flex-direction: column; font-family: Lato, sans-serif; color: #24272a; }
.pop-head { height: 108px; background: #f2f3f4; display: flex; align-items: center; padding: 0 22px 0 25px; flex: none; }
.mm { width: 50px; height: 46px; }
.network { margin: 0 24px 0 auto; width: 274px; height: 52px; border: 1px solid #bbc0c5; border-radius: 26px; display: flex; align-items: center; padding-left: 12px; font: 18px Roboto, sans-serif; letter-spacing: .42px; color: #535a61; }
.network span { padding-bottom: 1px; }
.network i { width: 18px; height: 18px; border-radius: 50%; background: #f6c343; margin-right: 12px; }
.network svg { width: 17px; height: 17px; margin-left: 15px; color: #24272a; }
.acct { width: 60px; height: 60px; }
.crumbs { height: 94px; margin-bottom: 2px; flex: none; display: flex; align-items: center; padding: 0 23px 0 37px; font-size: 20.700px; letter-spacing: .55px; }
.back { width: 14px; height: 21px; margin: -2px 15px 0 0; }
.crumbs b { margin-left: 6px; letter-spacing: 0; font-weight: bold; font-size: 20.500px; }
.more { width: 8px; height: 26px; margin: 2px 0 0 auto; }
.asset { height: 316px; flex: none; display: flex; flex-direction: column; align-items: center; padding: 15px 0 0 2px; box-shadow: 0 3px 5px rgba(0,0,0,.13); }
.token { width: 48px; height: 48px; }
.amount { margin-top: 29px; height: 56px; display: flex; gap: 7px; font-size: 47px; line-height: 56px; color: #000; letter-spacing: 1.600px; }
.unit { letter-spacing: -1.700px; }
.actions { display: flex; gap: 54px; margin-top: 41px; }
.actions svg { width: 54px; height: 54px; }
.actions div { width: 54px; display: flex; flex-direction: column; align-items: center; }
.actions span { margin-top: 9px; font-size: 19.500px; line-height: 24px; letter-spacing: .7px; color: #037dd6; }
.empty { margin-top: 36px; padding-left: 2px; text-align: center; font-size: 24.500px; line-height: 30px; letter-spacing: .68px; color: #cbcbcb; }
.ink { position: absolute; left: 0; top: 0; width: 1920px; height: 1080px; pointer-events: none; }
.ink path { fill: none; stroke: #cf1278; stroke-width: 9.500; stroke-linecap: round; stroke-linejoin: round; }
```
